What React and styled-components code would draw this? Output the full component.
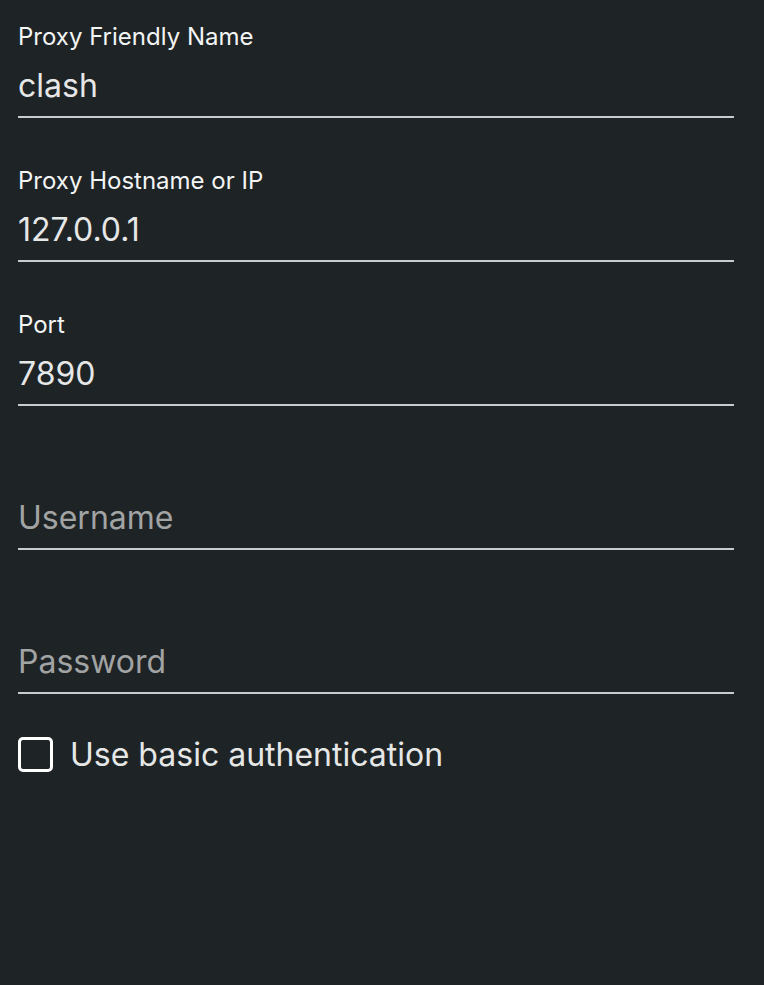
import React, { useState } from 'react'
import styled, { createGlobalStyle } from 'styled-components'

const GlobalStyle = createGlobalStyle`
    html, body {
        margin: 0;
        padding: 0;
        background: #1e2326;
    }
    body {
        font-family: Inter, "Noto Sans", sans-serif;
    }
`;

const Page = styled.div`
    width: 764px;
    height: 985px;
    box-sizing: border-box;
    padding: 18px 30px 0 18px;
    background: #1e2326;
    display: flex;
    flex-direction: column;
    gap: 44px;
`;

const Field = styled.label`
    display: flex;
    flex-direction: column;
    height: 100px;
    box-sizing: border-box;
    padding-top: 5px;
`;

const Label = styled.span`
    height: 28px;
    font-size: 24px;
    line-height: 28px;
    color: #f3f4f4;
`;

const Input = styled.input`
    margin-top: 4px;
    height: 63px;
    box-sizing: border-box;
    padding: 0 0 1px;
    background: transparent;
    border: none;
    border-bottom: 2px solid #c8cbcb;
    outline: none;
    font-family: inherit;
    font-size: 32px;
    color: #e6e7e7;

    &::placeholder {
        color: #a2a4a4;
    }
`;

const CheckRow = styled.label`
    display: flex;
    align-items: center;
    gap: 17px;
    height: 35px;
    margin-top: -1px;
    font-size: 32px;
    line-height: 35px;
    color: #e6e7e7;
    cursor: pointer;
`;

const Box = styled.span`
    width: 35px;
    height: 35px;
    box-sizing: border-box;
    border: 3px solid #ffffff;
    border-radius: 5px;
    background: ${props => props.checked ? '#ffffff' : 'transparent'};
`;

const fields = [
    { label: 'Proxy Friendly Name', value: 'clash' },
    { label: 'Proxy Hostname or IP', value: '127.0.0.1' },
    { label: 'Port', value: '7890' },
    { label: '', placeholder: 'Username' },
    { label: '', placeholder: 'Password', type: 'password' },
]

export default function App() {
    const [checked, setChecked] = useState(false)

    return (
        <Page>
            <GlobalStyle />
            {fields.map(f => (
                <Field key={f.label + (f.placeholder || '')}>
                    <Label>{f.label}</Label>
                    <Input defaultValue={f.value} placeholder={f.placeholder} type={f.type || 'text'} />
                </Field>
            ))}
            <CheckRow onClick={() => setChecked(!checked)}>
                <Box checked={checked} />
                Use basic authentication
            </CheckRow>
        </Page>
    )
}
